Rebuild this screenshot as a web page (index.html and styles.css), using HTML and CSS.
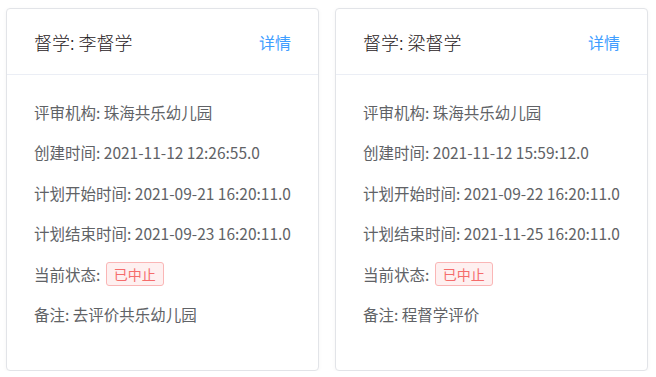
FILE: index.html
```html
<!DOCTYPE html>
<html lang="zh-CN">
<head>
<meta charset="utf-8">
<link rel="stylesheet" href="styles.css">
</head>
<body>
<div class="grid">
  <div class="card">
    <div class="card-header">
      <span class="title">督学: 李督学</span>
      <a class="link">详情</a>
    </div>
    <div class="card-body">
      <div class="row">评审机构: 珠海共乐幼儿园</div>
      <div class="row">创建时间: 2021-11-12 12:26:55.0</div>
      <div class="row">计划开始时间: 2021-09-21 16:20:11.0</div>
      <div class="row">计划结束时间: 2021-09-23 16:20:11.0</div>
      <div class="row">当前状态: <span class="tag">已中止</span></div>
      <div class="row">备注: 去评价共乐幼儿园</div>
    </div>
  </div>
  <div class="card">
    <div class="card-header">
      <span class="title">督学: 梁督学</span>
      <a class="link">详情</a>
    </div>
    <div class="card-body">
      <div class="row">评审机构: 珠海共乐幼儿园</div>
      <div class="row">创建时间: 2021-11-12 15:59:12.0</div>
      <div class="row">计划开始时间: 2021-09-22 16:20:11.0</div>
      <div class="row">计划结束时间: 2021-11-25 16:20:11.0</div>
      <div class="row">当前状态: <span class="tag">已中止</span></div>
      <div class="row">备注: 程督学评价</div>
    </div>
  </div>
</div>
</body>
</html>
```
FILE: styles.css
```css
html, body {
  margin: 0;
  padding: 0;
  background: #ffffff;
}
body {
  font-family: "Noto Sans CJK SC", "Noto Sans", sans-serif;
  color: #606266;
}
.grid {
  display: grid;
  grid-template-columns: 313px 313px;
  column-gap: 16px;
  padding: 8px 0 0 6px;
}
.card {
  height: 363px;
  box-sizing: border-box;
  border: 1px solid #e2e4e8;
  border-radius: 4px;
  background: #fff;
  box-shadow: 0 1px 4px rgba(0, 0, 0, 0.04);
  overflow: hidden;
}
.card-header {
  display: flex;
  justify-content: space-between;
  align-items: center;
  height: 65px;
  padding: 0 27px;
  border-bottom: 1px solid #ebeef5;
}
.title {
  font-size: 18px;
  font-weight: 300;
  color: #1f2022;
}
.link {
  font-size: 16px;
  color: #409eff;
  cursor: pointer;
}
.card-body {
  display: flex;
  flex-direction: column;
  gap: 16.4px;
  padding: 25px 27px 0;
}
.row {
  display: flex;
  align-items: center;
  height: 24px;
  font-size: 15.5px;
  color: #606266;
  white-space: pre;
}
.tag {
  display: inline-flex;
  align-items: center;
  box-sizing: border-box;
  height: 24px;
  padding: 0 7px;
  margin-left: 2px;
  font-size: 14px;
  color: #f56c6c;
  background: #fef0f0;
  border: 1px solid #fab6b6;
  border-radius: 3px;
}
```
